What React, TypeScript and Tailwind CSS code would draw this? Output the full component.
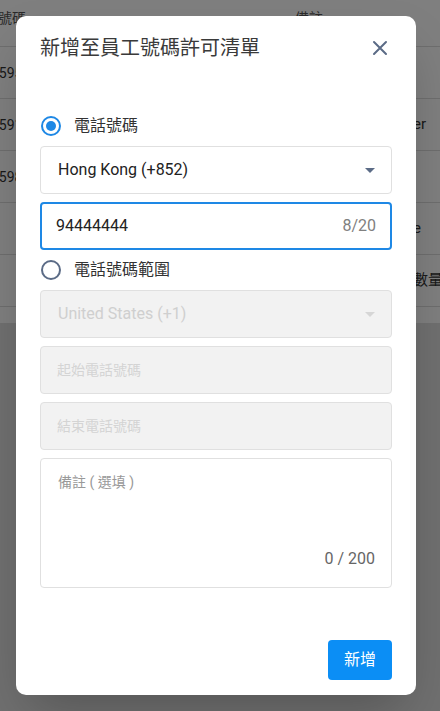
import React from 'react';

const font = { fontFamily: 'Roboto, "Noto Sans CJK TC", sans-serif' };

const rows = [
  { left: '號碼', right: '備註', header: true },
  { left: '1595', right: '' },
  { left: '1591', right: 'er' },
  { left: '1598', right: '' },
  { left: '', right: 'e' },
  { left: '', right: '數量' },
];

function Radio({ checked, label }: { checked: boolean; label: string }) {
  return (
    <div className="flex items-center h-6 gap-[13px] pl-px">
      <span
        className={`w-5 h-5 rounded-full border-2 flex items-center justify-center ${
          checked ? 'border-[#1e88e5]' : 'border-[#5b6b86]'
        }`}
      >
        {checked && <span className="w-[10px] h-[10px] rounded-full bg-[#1e88e5]" />}
      </span>
      <span className="text-base text-[#333]">{label}</span>
    </div>
  );
}

function Caret({ color }: { color: string }) {
  return (
    <svg width="10" height="5" viewBox="0 0 10 5">
      <path d="M0 0 L10 0 L5 5 Z" fill={color} />
    </svg>
  );
}

export default function App() {
  return (
    <div className="relative w-[440px] h-[711px] overflow-hidden bg-[#e0e0e0]" style={font}>
      {/* page behind the dialog */}
      <div className="flex h-full">
        <div className="flex-1">
          <div className="bg-white pb-[16px]">
            {rows.map((r, i) => (
              <div
                key={i}
                className={`flex border-b border-[#ddd] ${
                  r.header ? 'h-[47px] items-start pt-[8px] text-sm text-[#555]' : 'h-[52px] items-center text-[15px] text-[#333]'
                }`}
              >
                <span className={`w-[297px] whitespace-nowrap ${r.header ? '-ml-[2px]' : '-ml-[9px] text-sm'}`}>{r.left}</span>
                <span className="flex-1 whitespace-nowrap overflow-hidden">
                  {r.right && <span className={r.header ? '' : 'pl-[125px]'}>{r.right}</span>}
                </span>
              </div>
            ))}
          </div>
        </div>
        <div className="w-1 bg-[#eaeaea]" />
      </div>

      {/* overlay */}
      <div className="absolute inset-0 bg-black/50" />

      {/* dialog */}
      <div className="absolute left-4 top-4 w-[400px] h-[679px] bg-white rounded-[10px] shadow-2xl px-6 pt-5 flex flex-col">
        <div className="flex items-center justify-between h-6">
          <h2 className="text-xl leading-6 text-[#3a3a3a] font-normal">新增至員工號碼許可清單</h2>
          <svg width="24" height="24" viewBox="0 0 24 24">
            <path d="M6 6 L18 18 M18 6 L6 18" stroke="#5b6b86" strokeWidth="2" strokeLinecap="round" />
          </svg>
        </div>

        <div className="mt-[54px]">
          <Radio checked label="電話號碼" />
        </div>

        <div className="mt-2 h-12 border border-[#e0e0e0] rounded flex items-center justify-between pl-[17px] pr-4">
          <span className="text-base text-[#222]">Hong Kong (+852)</span>
          <Caret color="#5b6b86" />
        </div>

        <div className="mt-2 h-12 border-2 border-[#1e88e5] rounded flex items-center justify-between pl-[14px] pr-[14px]">
          <span className="text-base text-[#222]">94444444</span>
          <span className="text-base text-[#808080]">8/20</span>
        </div>

        <div className="mt-2">
          <Radio checked={false} label="電話號碼範圍" />
        </div>

        <div className="mt-2 h-12 border border-[#e0e0e0] bg-[#f2f2f2] rounded flex items-center justify-between pl-[17px] pr-4">
          <span className="text-base text-[#cfcfcf]">United States (+1)</span>
          <Caret color="#d6d6d6" />
        </div>

        <div className="mt-2 h-12 border border-[#e0e0e0] bg-[#f2f2f2] rounded flex items-center pl-4">
          <span className="text-sm text-[#d4d4d4]">起始電話號碼</span>
        </div>

        <div className="mt-2 h-12 border border-[#e0e0e0] bg-[#f2f2f2] rounded flex items-center pl-4">
          <span className="text-sm text-[#d4d4d4]">結束電話號碼</span>
        </div>

        <div className="mt-2 h-[130px] border border-[#e0e0e0] rounded flex flex-col justify-between pl-[17px] pr-4 pt-[13px] pb-[16px]">
          <span className="text-sm text-[#999]">備註 ( 選填 )</span>
          <span className="text-base text-[#666] self-end">0 / 200</span>
        </div>

        <div className="mt-[52px] flex justify-end">
          <button className="h-10 w-16 rounded bg-[#0b8ef5] text-white text-base">新增</button>
        </div>
      </div>
    </div>
  );
}
